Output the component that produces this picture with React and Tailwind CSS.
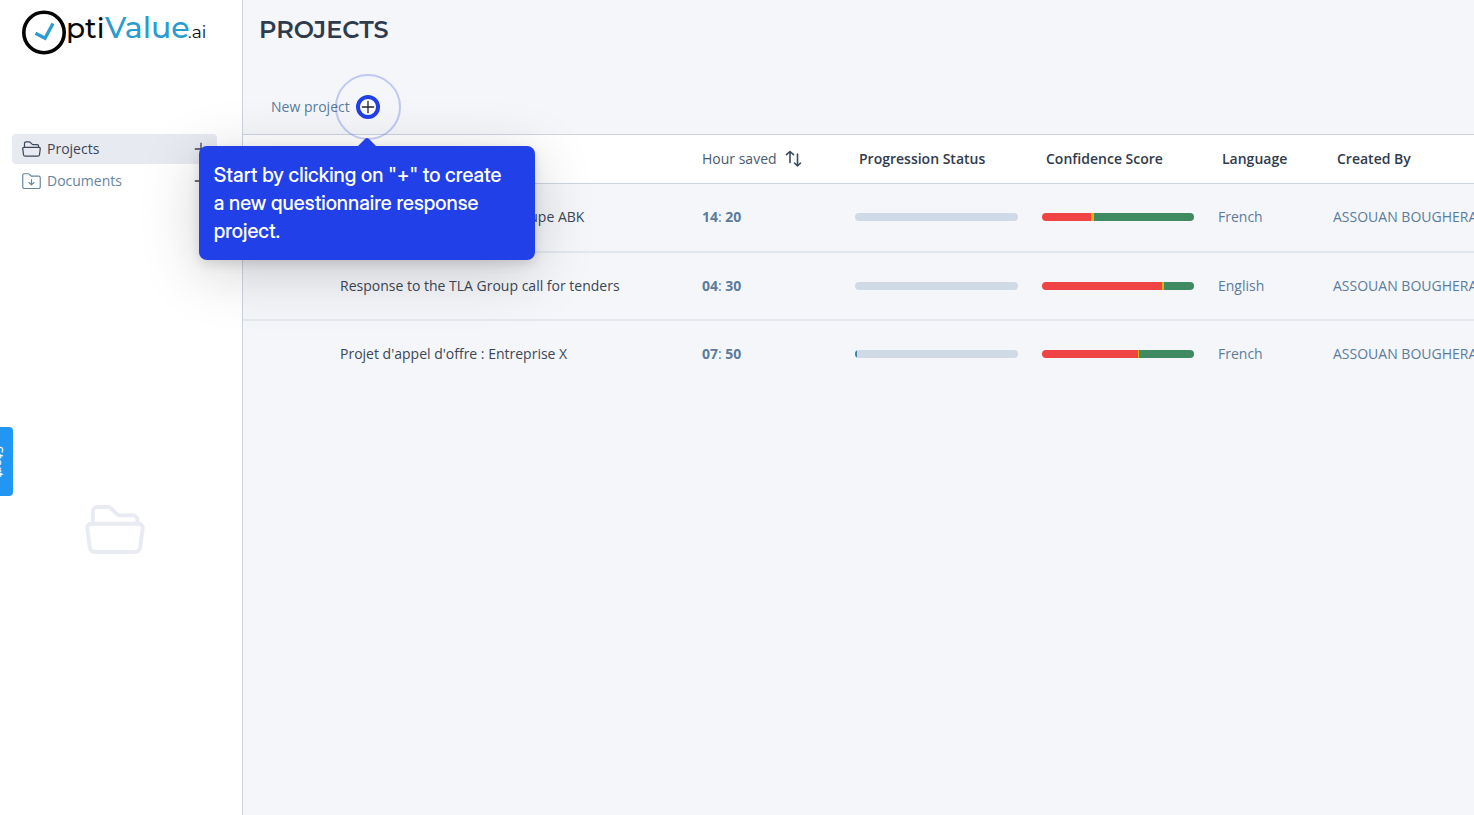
import { useState } from "react";

const projects = [
  {
    name: "Réponse à l'appel d'offre Groupe ABK",
    hours: "14",
    minutes: "20",
    progress: 0,
    score: { red: 32, yellow: 2, green: 66 },
    language: "French",
    createdBy: "ASSOUAN BOUGHERARA",
  },
  {
    name: "Response to the TLA Group call for tenders",
    hours: "04",
    minutes: "30",
    progress: 0,
    score: { red: 79, yellow: 1, green: 20 },
    language: "English",
    createdBy: "ASSOUAN BOUGHERARA",
  },
  {
    name: "Projet d'appel d'offre : Entreprise X",
    hours: "07",
    minutes: "50",
    progress: 1,
    score: { red: 63, yellow: 1, green: 36 },
    language: "French",
    createdBy: "ASSOUAN BOUGHERARA",
  },
];

function Logo() {
  return (
    <svg width="190" height="48" viewBox="0 0 190 48" role="img" aria-label="OptiValue.ai">
      <circle cx="24" cy="24.5" r="20.2" fill="none" stroke="#050505" strokeWidth="3.6" />
      <path
        d="M15.500 25.200 L25 30.200 L33 15.500"
        fill="none"
        stroke="#2b9bd0"
        strokeWidth="3.4"
      />
      <g fontFamily="Montserrat, Lato, sans-serif">
        <text x="46" y="30" fontSize="28" fontWeight="500" fill="#0a0a0a">pti</text>
        <text x="85" y="30" fontSize="30" fontWeight="500" fill="#2b9bd0">Value</text>
        <text x="168" y="30" fontSize="17" fill="#0a0a0a">.ai</text>
      </g>
    </svg>
  );
}

function FolderOpenIcon({ className, strokeWidth = 1.3 }) {
  return (
    <svg
      className={className}
      viewBox="0 0 20 17"
      fill="none"
      stroke="currentColor"
      strokeWidth={strokeWidth}
      strokeLinecap="round"
      strokeLinejoin="round"
      aria-hidden="true"
    >
      <path d="M2.6 6.6V2.6a1.6 1.6 0 0 1 1.6-1.6h3.4a1.6 1.6 0 0 1 1 .4l2 1.9a1.6 1.6 0 0 0 1.1.5h4.2a1.6 1.6 0 0 1 1.6 1.6v1.2" />
      <path d="M2.2 6.600h15.600a1.400 1.400 0 0 1 1.400 1.700l-.8 6.200a1.700 1.700 0 0 1-1.700 1.500h-13.400a1.700 1.700 0 0 1-1.700-1.500l-.8-6.200a1.400 1.400 0 0 1 1.400-1.700z" />
    </svg>
  );
}

function FolderDownIcon({ className }) {
  return (
    <svg
      className={className}
      viewBox="0 0 18 16"
      fill="none"
      stroke="currentColor"
      strokeWidth="1.1"
      strokeLinecap="round"
      strokeLinejoin="round"
      aria-hidden="true"
    >
      <path d="M.7 13V2.2A1.5 1.5 0 0 1 2.2.7h3.6a1.5 1.5 0 0 1 1 .4l1.6 1.5a1.5 1.5 0 0 0 1 .4h6.4a1.5 1.5 0 0 1 1.5 1.5V13a1.8 1.8 0 0 1-1.8 1.8h-13A1.8 1.8 0 0 1 .7 13z" />
      <path d="M9 6.2v5M6.6 9l2.4 2.3L11.400 9" />
    </svg>
  );
}

function PlusIcon({ className }) {
  return (
    <svg className={className} viewBox="0 0 14 14" fill="none" stroke="currentColor" strokeWidth="1.3" aria-hidden="true">
      <path d="M7 .8v12.400M.8 7h12.400" />
    </svg>
  );
}

function SortIcon() {
  return (
    <svg
      width="18"
      height="18"
      viewBox="0 0 18 18"
      fill="none"
      stroke="#3b4a5f"
      strokeWidth="1.6"
      strokeLinecap="round"
      strokeLinejoin="round"
      aria-hidden="true"
    >
      <path d="M5 12.500V1.500M1.500 4.700l3.500-3.200L8.500 4.700" />
      <path d="M12.500 4v12M9.500 13l3 3L15.500 13" />
    </svg>
  );
}

function Sidebar() {
  return (
    <aside className="flex w-[243px] shrink-0 flex-col border-r border-[#cdd3e0] bg-white pr-[25px] pl-3">
      <a href="#" className="ml-2 flex pt-2">
        <Logo />
      </a>

      <nav className="mt-[78px] flex flex-col gap-0.5">
        <div className="flex h-[30px] items-center rounded bg-[#e8eaf2] pr-[9px] pl-2.5 text-[#3b4657]">
          <a href="#projects" className="flex flex-1 items-center gap-1.5">
            <FolderOpenIcon className="w-[19px]" />
            Projects
          </a>
          <button type="button" aria-label="Add project">
            <PlusIcon className="size-[14px]" />
          </button>
        </div>
        <div className="flex h-[30px] items-center rounded pr-[9px] pl-2.5 text-[#6584a3]">
          <a href="#documents" className="flex flex-1 items-center gap-1.5">
            <FolderDownIcon className="w-[19px]" />
            Documents
          </a>
          <button type="button" aria-label="Add document" className="text-[#3b4657]">
            <PlusIcon className="size-[14px]" />
          </button>
        </div>
      </nav>

      <div className="flex flex-1 items-center justify-center pt-12 text-[#e8ebf1]">
        <FolderOpenIcon className="w-[60px]" />
      </div>
    </aside>
  );
}

function NewProject({ showTip, onCreate }) {
  return (
    <div className="flex items-center gap-1.5 pl-7 text-[#5b7c9d]">
      <label htmlFor="new-project">New project</label>
      <div className="relative z-10 size-6">
        <button
          id="new-project"
          type="button"
          onClick={onCreate}
          className="flex size-6 items-center justify-center rounded-full border-4 border-[#2140e8] bg-white text-[#22262e]"
        >
          <PlusIcon className="size-[14px] shrink-0" />
        </button>
        {showTip && (
          <>
            <span className="pointer-events-none absolute -inset-[21px] rounded-full border-2 border-[#2140e8]/25" />
            <div
              role="tooltip"
              className="absolute top-[51px] -left-[157px] z-20 w-[336px] rounded-lg bg-[#2140e8] py-[15px] pr-5 pl-[15px] font-['Inter_Display','Inter',sans-serif] text-[20px] leading-7 font-medium text-white shadow-[0_12px_60px_rgba(0,0,0,0.18),0_4px_12px_rgba(0,0,0,0.12)]"
            >
              <svg className="absolute bottom-full left-[159px]" width="18" height="8" viewBox="0 0 18 8" aria-hidden="true">
                <path d="M0 8 L7.500 .6 Q9 -.4 10.500 .6 L18 8z" fill="#2140e8" />
              </svg>
              Start by clicking on "+" to create a new questionnaire response project.
            </div>
          </>
        )}
      </div>
    </div>
  );
}

function ProgressBar({ value }) {
  return (
    <div className="h-2 overflow-hidden rounded-full bg-[#d0dae6]">
      <div className="h-full bg-[#3f84a5]" style={{ width: `${value}%` }} />
    </div>
  );
}

function ScoreBar({ score }) {
  return (
    <div className="flex h-2 overflow-hidden rounded-full">
      <div className="bg-[#f04444]" style={{ width: `${score.red}%` }} />
      <div className="bg-[#eab308]" style={{ width: `${score.yellow}%` }} />
      <div className="bg-[#3f8a60]" style={{ width: `${score.green}%` }} />
    </div>
  );
}

function ProjectsTable() {
  return (
    <div className="overflow-hidden">
      <table className="w-full min-w-[1300px] table-fixed border-collapse text-left whitespace-nowrap">
        <colgroup>
          <col className="w-[85px]" />
          <col className="w-[362px]" />
          <col className="w-[153px]" />
          <col className="w-[187px]" />
          <col className="w-[176px]" />
          <col className="w-[115px]" />
          <col />
        </colgroup>
        <thead>
          <tr className="h-[49px] border-y border-[#cdd3e0] bg-white text-[#2f3b4d]">
            <th />
            <th className="px-3 font-semibold">Name</th>
            <th className="px-3 font-normal text-[#4a5b70]">
              <button type="button" className="flex items-center gap-2">
                Hour saved <SortIcon />
              </button>
            </th>
            <th className="px-4 font-semibold">Progression Status</th>
            <th className="px-4 font-semibold">Confidence Score</th>
            <th className="px-4 font-semibold">Language</th>
            <th className="px-4 font-semibold">Created By</th>
          </tr>
        </thead>
        <tbody className="text-[#5b7c9d]">
          {projects.map((project) => (
            <tr key={project.name} className="h-[68px] border-b-2 border-[#e3e7ee] last:border-b-0">
              <td />
              <td className="px-3 text-[#3b4657]">{project.name}</td>
              <td className="px-3">
                <b>{project.hours}</b>: <b>{project.minutes}</b>
              </td>
              <td className="px-3">
                <ProgressBar value={project.progress} />
              </td>
              <td className="px-3">
                <ScoreBar score={project.score} />
              </td>
              <td className="px-3">{project.language}</td>
              <td className="px-3">{project.createdBy}</td>
            </tr>
          ))}
        </tbody>
      </table>
    </div>
  );
}

function App() {
  const [showTip, setShowTip] = useState(true);

  return (
    <div className="flex min-h-screen overflow-hidden bg-[#f5f6fa] font-['Open_Sans',sans-serif] text-[14px] leading-5">
      <Sidebar />

      {/* Main content */}
      <main className="min-w-0 flex-1">
        <h1 className="pt-[14px] pl-4 font-['Montserrat','Inter',sans-serif] text-[24px] leading-8 font-semibold text-[#2f3b4d]">
          PROJECTS
        </h1>
        <div className="mt-[49px] mb-[15px]">
          <NewProject showTip={showTip} onCreate={() => setShowTip(false)} />
        </div>
        <ProjectsTable />
      </main>

      {/* Side tab */}
      <button
        type="button"
        className="fixed top-[427px] -left-[17px] flex h-[69px] w-[30px] items-center justify-center rounded-r bg-[#2196f3] text-white [writing-mode:vertical-rl]"
      >
        Start
      </button>
    </div>
  );
}

export default App;
